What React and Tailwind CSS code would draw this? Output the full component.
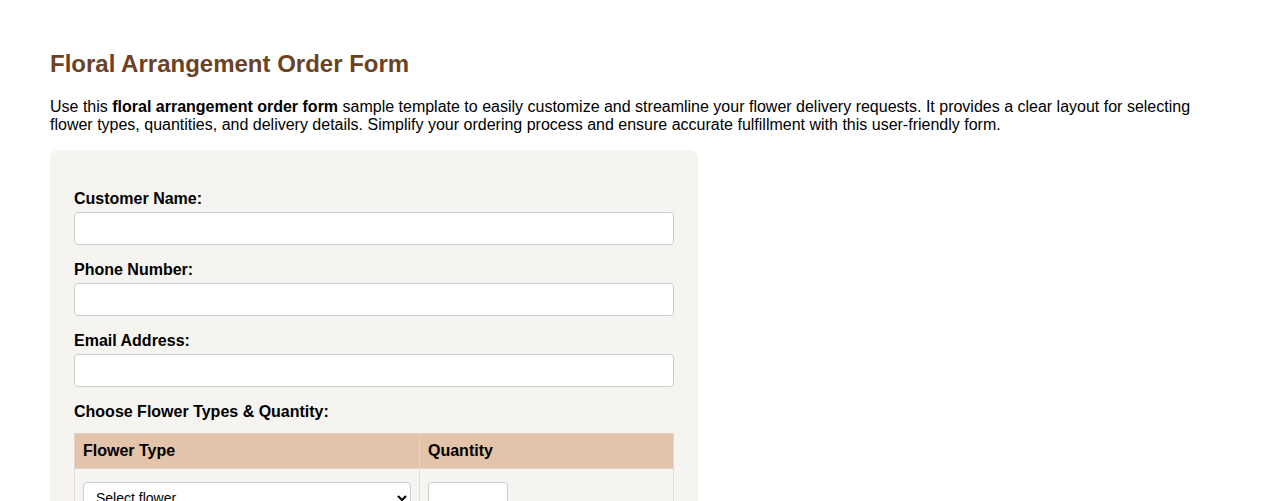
import React, { useState } from 'react'

const Field = ({ label, type = 'text', value, onChange }) => (
  <div>
    <label className="block mt-[16px] mb-[4px] font-bold text-[16px] leading-[18px]">{label}</label>
    <input
      type={type}
      value={value}
      onChange={(e) => onChange(e.target.value)}
      className="block w-full h-[33px] px-2 bg-white border border-[#cccccc] rounded-[4px] text-[14px]"
    />
  </div>
)

const App = () => {
  const [name, setName] = useState('')
  const [phone, setPhone] = useState('')
  const [email, setEmail] = useState('')
  const [flower, setFlower] = useState('')
  const [qty, setQty] = useState('')

  return (
    <div className="min-h-screen bg-white px-[50px] pt-[50px] text-black font-['Liberation_Sans',Arial,sans-serif]">
      <h1 className="text-[24px] leading-[28px] font-bold text-[#6b4226]">Floral Arrangement Order Form</h1>
      <p className="mt-[20px] text-[16px] leading-[18px]">
        Use this <strong>floral arrangement order form</strong> sample template to easily customize and streamline your flower delivery requests. It provides a clear layout for selecting flower types, quantities, and delivery details. Simplify your ordering process and ensure accurate fulfillment with this user-friendly form.
      </p>
      <form className="mt-[16px] w-[648px] bg-[#f5f4f1] rounded-[8px] p-[24px]" onSubmit={(e) => e.preventDefault()}>
        <Field label="Customer Name:" value={name} onChange={setName} />
        <Field label="Phone Number:" type="tel" value={phone} onChange={setPhone} />
        <Field label="Email Address:" type="email" value={email} onChange={setEmail} />
        <label className="block mt-[16px] mb-[12px] font-bold text-[16px] leading-[18px]">Choose Flower Types &amp; Quantity:</label>
        <table className="w-full border-collapse">
          <thead>
            <tr className="bg-[#e3c3a9]">
              <th className="w-[345px] border border-[#dcd6cf] px-2 py-2 text-left font-bold text-[16px] leading-[18px]">Flower Type</th>
              <th className="border border-[#dcd6cf] px-2 py-2 text-left font-bold text-[16px] leading-[18px]">Quantity</th>
            </tr>
          </thead>
          <tbody>
            <tr>
              <td className="border border-[#e2ddd7] px-2 pt-[12px] pb-2">
                <select
                  value={flower}
                  onChange={(e) => setFlower(e.target.value)}
                  className="block w-full h-[33px] px-2 bg-white border border-[#cccccc] rounded-[4px] text-[14px]"
                >
                  <option value="">Select flower</option>
                  <option>Roses</option>
                  <option>Tulips</option>
                  <option>Lilies</option>
                  <option>Orchids</option>
                </select>
              </td>
              <td className="border border-[#e2ddd7] px-2 pt-[13px] pb-2">
                <input
                  type="number"
                  value={qty}
                  onChange={(e) => setQty(e.target.value)}
                  className="block w-[80px] h-[33px] px-2 bg-white border border-[#cccccc] rounded-[4px] text-[14px]"
                />
              </td>
            </tr>
          </tbody>
        </table>
      </form>
    </div>
  )
}

export default App
